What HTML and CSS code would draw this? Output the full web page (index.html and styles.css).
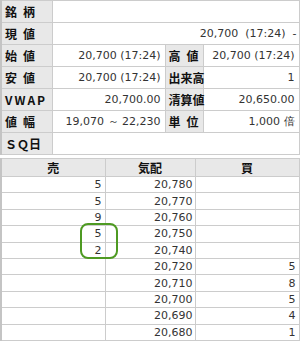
FILE: index.html
```html
<!DOCTYPE html>
<html lang="ja">
<head>
<meta charset="utf-8">
<link rel="stylesheet" href="styles.css">
</head>
<body>
<div class="page">
  <table class="info">
    <colgroup><col class="c-lab"><col class="c-val1"><col class="c-lab2"><col class="c-val2"></colgroup>
    <tr><th>銘&ensp;柄</th><td colspan="3"></td></tr>
    <tr><th>現&ensp;値</th><td colspan="3" class="now">20,700&nbsp; (17:24)&nbsp; -</td></tr>
    <tr><th>始&ensp;値</th><td>20,700 (17:24)</td><th>高&ensp;値</th><td>20,700 (17:24)</td></tr>
    <tr><th>安&ensp;値</th><td>20,700 (17:24)</td><th>出来高</th><td>1</td></tr>
    <tr><th class="latin">VWAP</th><td>20,700.00</td><th>清算値</th><td>20,650.00</td></tr>
    <tr><th>値&ensp;幅</th><td>19,070 ～ 22,230</td><th>単&ensp;位</th><td>1,000 倍</td></tr>
    <tr><th>ＳＱ日</th><td colspan="3"></td></tr>
  </table>

  <div class="board-wrap">
    <table class="board">
      <colgroup><col class="b-sell"><col class="b-price"><col class="b-buy"></colgroup>
      <tr class="head"><th>売</th><th>気配</th><th>買</th></tr>
      <tr><td>5</td><td>20,780</td><td></td></tr>
      <tr><td>5</td><td>20,770</td><td></td></tr>
      <tr><td>9</td><td>20,760</td><td></td></tr>
      <tr><td>5</td><td>20,750</td><td></td></tr>
      <tr><td>2</td><td>20,740</td><td></td></tr>
      <tr><td></td><td>20,720</td><td>5</td></tr>
      <tr><td></td><td>20,710</td><td>8</td></tr>
      <tr><td></td><td>20,700</td><td>5</td></tr>
      <tr><td></td><td>20,690</td><td>4</td></tr>
      <tr><td></td><td>20,680</td><td>1</td></tr>
    </table>
    <div class="highlight"></div>
  </div>
</div>
</body>
</html>
```

FILE: styles.css
```css
html, body {
  margin: 0;
  padding: 0;
  background: #ffffff;
}

.page {
  width: 300px;
  height: 342px;
  overflow: hidden;
  font-family: "DejaVu Sans", Verdana, sans-serif;
  font-size: 11px;
  color: #333333;
}

table {
  border-collapse: collapse;
  table-layout: fixed;
}

.info {
  width: 298px;
  border-left: 2px solid #c4c4c4;
}

.info td,
.info th {
  height: 21px;
  padding: 0 4px 0 3px;
  border: 1px solid #cccccc;
  vertical-align: middle;
}

.info th {
  background: #e8e8e8;
  text-align: left;
  font-family: "Noto Sans CJK JP", sans-serif;
  font-weight: bold;
  font-size: 12px;
  color: #111111;
  white-space: nowrap;
  padding-left: 3px;
  padding-right: 0;
}

.info th.latin {
  letter-spacing: 2px;
}

.info td {
  text-align: right;
  white-space: nowrap;
}

.info td.now {
  padding-right: 2px;
}

.c-lab { width: 51px; }
.c-val1 { width: 113px; }
.c-lab2 { width: 38px; }
.c-val2 { width: 96px; }

.board-wrap {
  position: relative;
  margin-top: 3px;
}

.board {
  width: 298px;
  border-left: 2px solid #c4c4c4;
}

.board td,
.board th {
  border: 1px solid #cccccc;
  padding: 0 3px;
  vertical-align: middle;
  white-space: nowrap;
}

.board th {
  height: 17px;
  background: #e8e8e8;
  font-family: "Noto Sans CJK JP", sans-serif;
  font-weight: bold;
  font-size: 12px;
  color: #111111;
  text-align: center;
}

.board td {
  height: 15.4px;
  text-align: right;
}

.board td:nth-child(2) {
  padding-right: 2px;
}

.b-sell { width: 104px; }
.b-price { width: 90px; }
.b-buy { width: 104px; }

.highlight {
  position: absolute;
  left: 80px;
  top: 65px;
  width: 34px;
  height: 32px;
  border: 2px solid #4e9a22;
  border-radius: 8px;
}
```
